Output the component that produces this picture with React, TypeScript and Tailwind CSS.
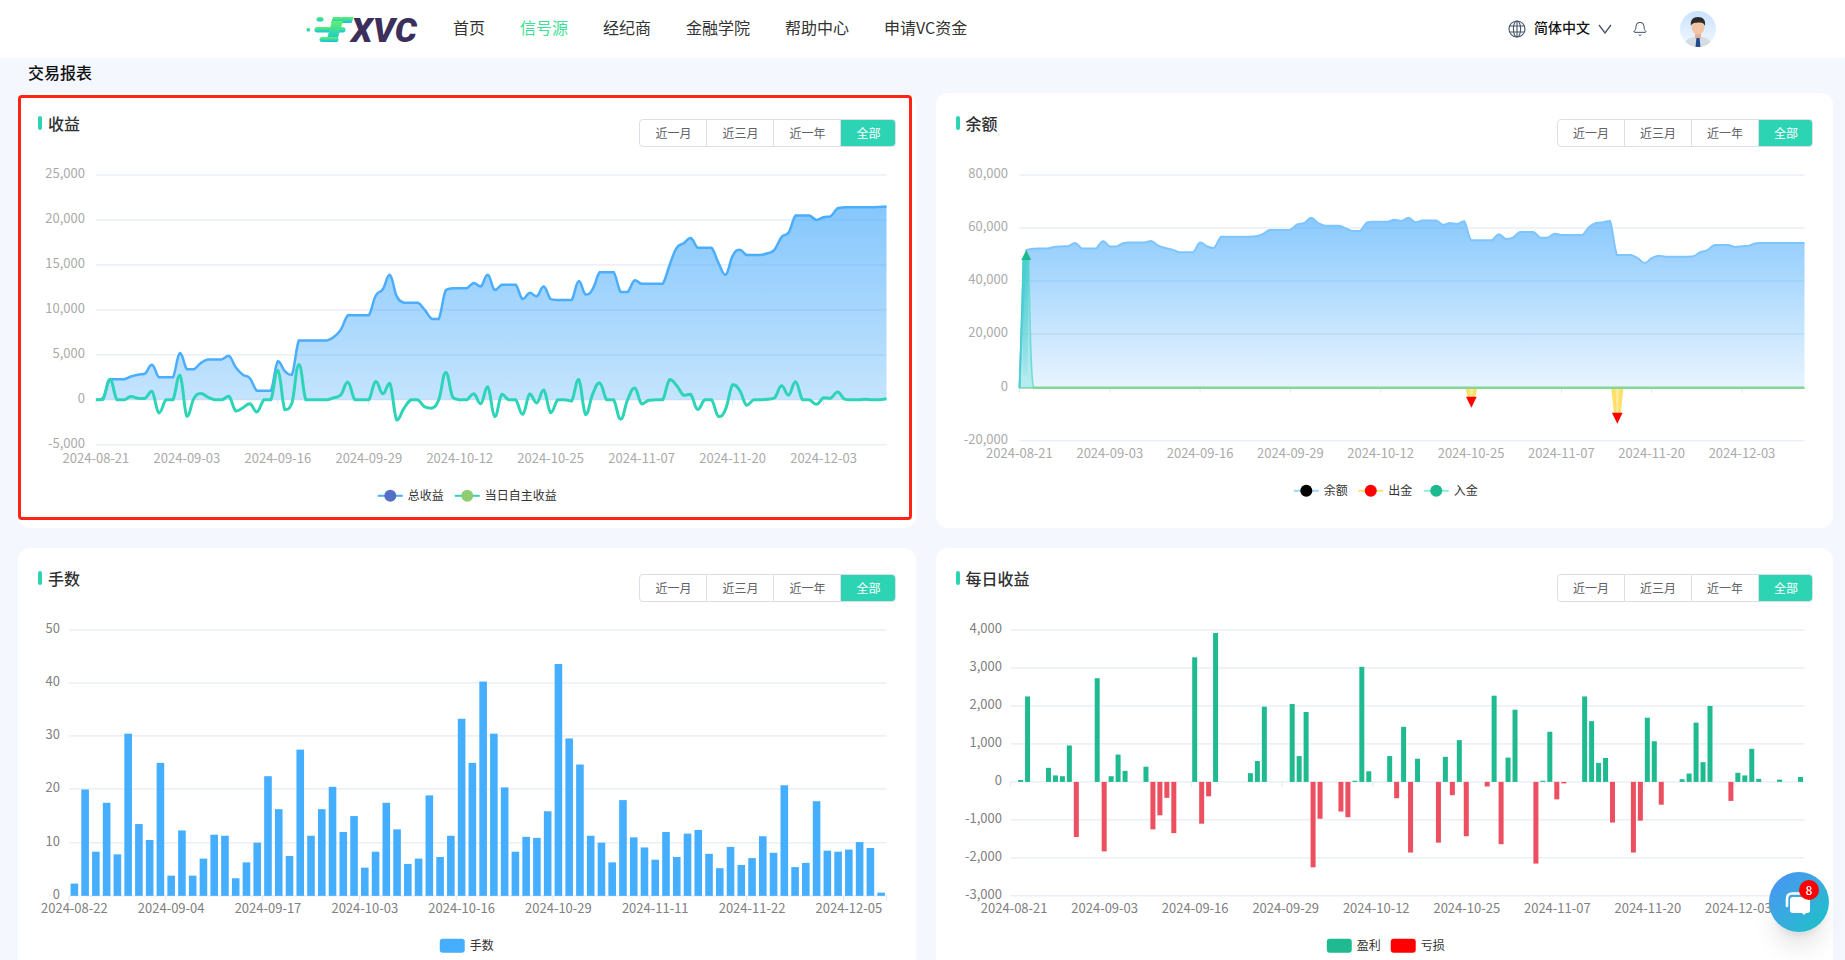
import { Bell } from "lucide-react";

// Chart data read off the report: thousands per day, one entry per category.
const DAILY = [
  0, 0.05, 2.25, 0, 0, 0.37, 0.17, 0.15, 0.96, -1.45,
  0, 0, 2.73, -1.83, 0.15, 0.72, 0.29, 0, 0, 0.4,
  -1.25, -0.88, -0.42, -1.35, 0, 0, 3.28, -1.1, -0.38, 3.92,
  0, 0, 0, 0, 0.23, 0.55, 1.98, 0, 0, 0,
  2.05, 0.68, 1.84, -2.25, -0.97, 0, 0, -0.78, -0.93, 0.03,
  3.03, 0.28, 0, 0, 0.68, -0.43, 1.45, -1.86, 0.61, 0,
  0, -1.6, 0.66, -0.35, 1.1, -1.43, 0, 0, -0.12, 2.27,
  -1.64, 0.64, 1.9, 0, 0, -2.15, 0.03, 1.32, -0.46, -0.04,
  0, 0, 2.25, 1.6, 0.5, 0.63, -1.07, 0, 0, -1.86,
  -1.02, 1.69, 1.07, -0.6, 0, 0, 0.07, 0.22, 1.56, 0.52,
  2, 0, 0, -0.5, 0.24, 0.17, 0.87, 0.08, 0, 0,
  0.06, 0, 0, 0.13,
];

const TOTAL = [
  0, 0.2, 2.3, 2.3, 2.3, 2.6, 2.8, 2.9, 3.9, 2.5,
  2.5, 2.5, 5.2, 3.4, 3.4, 4.1, 4.5, 4.5, 4.5, 4.9,
  3.6, 2.8, 2.4, 1, 1, 1, 4.3, 3.2, 2.8, 6.6,
  6.6, 6.6, 6.6, 6.6, 7, 7.8, 9.4, 9.4, 9.4, 9.4,
  11.6, 12.3, 13.9, 11.5, 10.8, 10.8, 10.8, 10, 9, 9,
  12.2, 12.4, 12.4, 12.4, 13, 12.6, 13.9, 12.2, 12.8, 12.8,
  12.8, 11.2, 11.9, 11.5, 12.6, 11.2, 11.1, 11.1, 11.1, 13.2,
  11.7, 12.3, 14.2, 14.2, 14.2, 12, 12, 13.3, 12.9, 12.9,
  12.9, 12.9, 15, 16.9, 17.4, 18, 16.9, 16.9, 16.9, 15.2,
  13.9, 16, 16.7, 16.1, 16.1, 16.1, 16.3, 16.7, 18.1, 18.6,
  20.5, 20.5, 20.5, 20, 20.3, 20.4, 21.3, 21.4, 21.4, 21.4,
  21.4, 21.4, 21.45, 21.5,
];

const BALANCE = [
  0, 51.8, 52.3, 52.4, 52.4, 53, 53.2, 53.3, 54.5, 52.4,
  52.4, 52.4, 55.2, 53.2, 53.2, 54.5, 54.7, 54.7, 54.7, 55.2,
  53.5, 52.6, 52, 51, 51, 51, 54.7, 53.2, 52.6, 56.8,
  56.8, 56.8, 56.8, 56.8, 57, 57.8, 59.4, 59.4, 59.4, 59.5,
  61.5, 62, 64, 62, 61, 61, 61, 60, 59, 59,
  62.2, 62.5, 62.5, 62.5, 63.2, 62.8, 64, 62.3, 63, 63,
  63, 61.3, 62, 61.6, 62.7, 55.5, 55.5, 55.5, 55.5, 57.8,
  56, 56.5, 58.6, 58.6, 58.6, 56.5, 56.5, 58, 57.5, 57.5,
  57.5, 57.5, 60.5, 62, 62.3, 62.8, 50, 50, 50, 48.8,
  47, 48.8, 49.7, 49.3, 49.3, 49.3, 49.3, 49.5, 51, 51.8,
  53.7, 53.7, 53.7, 53, 53.3, 53.5, 54.4, 54.5, 54.5, 54.5,
  54.5, 54.5, 54.5, 54.5,
];

const LOTS = [
  2.3, 20, 8.3, 17.5, 7.8, 30.5, 13.5, 10.5, 25, 3.8,
  12.3, 3.8, 7, 11.5, 11.3, 3.3, 6.3, 10, 22.5, 16.3,
  7.5, 27.5, 11.3, 16.3, 20.5, 12, 15, 5.3, 8.3, 17.5,
  12.5, 6, 7, 18.9, 7.3, 11.3, 33.3, 25, 40.3, 30.5,
  20.4, 8.3, 11.1, 10.9, 15.9, 43.6, 29.6, 24.7, 11.3, 10,
  6.3, 18, 11, 9.1, 6.8, 12, 7.3, 11.7, 12.4, 7.9,
  5.2, 9.2, 5.8, 7.1, 11.2, 8.1, 20.8, 5.4, 6.2, 17.8,
  8.5, 8.3, 8.7, 10.1, 9, 0.6,
];

const DATES_13 = ["2024-08-21", "2024-09-03", "2024-09-16", "2024-09-29", "2024-10-12", "2024-10-25", "2024-11-07", "2024-11-20", "2024-12-03"];
const DATES_LOTS = ["2024-08-22", "2024-09-04", "2024-09-17", "2024-10-03", "2024-10-16", "2024-10-29", "2024-11-11", "2024-11-22", "2024-12-05"];
const RANGES = ["近一月", "近三月", "近一年", "全部"];

type Pt = [number, number];

const clamp = (v: number, a: number, b: number) => Math.min(Math.max(a, b), Math.max(Math.min(a, b), v));

// Same idea as echarts' smooth line: control points stay between the neighbours.
const smoothPath = (pts: Pt[]) => {
  const k = 0.22;
  let d = `M${pts[0][0]} ${pts[0][1]}`;
  for (let i = 0; i < pts.length - 1; i++) {
    const p0 = pts[i - 1] ?? pts[i];
    const p1 = pts[i];
    const p2 = pts[i + 1];
    const p3 = pts[i + 2] ?? p2;
    const c1y = clamp(p1[1] + (p2[1] - p0[1]) * k, p1[1], p2[1]);
    const c2y = clamp(p2[1] - (p3[1] - p1[1]) * k, p1[1], p2[1]);
    d += `C${p1[0] + (p2[0] - p0[0]) * k} ${c1y} ${p2[0] - (p3[0] - p1[0]) * k} ${c2y} ${p2[0]} ${p2[1]}`;
  }
  return d;
};

function Grid({ x1, x2, rows, end, color }: { x1: number; x2: number; rows: [string, number][]; end: number; color: string }) {
  return (
    <g>
      {rows.map(([label, y]) => (
        <g key={label}>
          <line x1={x1} x2={x2} y1={y} y2={y} stroke="#e0e6f1" />
          <text x={end} y={y + 3} textAnchor="end" fontSize={13} fill={color}>
            {label}
          </text>
        </g>
      ))}
    </g>
  );
}

function XAxis({ labels, at, y, color }: { labels: string[]; at: (i: number) => number; y: number; color: string }) {
  return (
    <g>
      {labels.map((label, i) => (
        <text key={label} x={at(i)} y={y} textAnchor="middle" fontSize={13} fill={color}>
          {label}
        </text>
      ))}
    </g>
  );
}

function Ticks({ xs, y }: { xs: number[]; y: number }) {
  return (
    <g>
      {xs.map((x) => (
        <line key={x} x1={x} x2={x} y1={y} y2={y + 5} stroke="#e0e6f1" />
      ))}
    </g>
  );
}

function LineLegend({ x, y, line, dot, label }: { x: number; y: number; line: string; dot: string; label: string }) {
  return (
    <g>
      <line x1={x} x2={x + 25} y1={y} y2={y} stroke={line} strokeWidth={2} />
      <circle cx={x + 12.5} cy={y} r={6} fill={dot} />
      <text x={x + 30} y={y + 4} fontSize={12} fill="#333">
        {label}
      </text>
    </g>
  );
}

function BarLegend({ x, y, color, label }: { x: number; y: number; color: string; label: string }) {
  return (
    <g>
      <rect x={x} y={y - 7} width={25} height={14} rx={3} fill={color} />
      <text x={x + 30} y={y + 4} fontSize={12} fill="#333">
        {label}
      </text>
    </g>
  );
}

function ProfitChart() {
  const xOf = (i: number) => 96 + i * 7;
  const yOf = (v: number) => 400 - v * 9;
  const total = TOTAL.map((v, i): Pt => [xOf(i), yOf(v)]);
  const daily = DAILY.map((v, i): Pt => [xOf(i), yOf(v)]);
  return (
    <svg viewBox="18 147 898 381" className="block w-full">
      <defs>
        <linearGradient id="profitArea" x1="0" y1="0" x2="0" y2="1">
          <stop offset="0" stopColor="#3ba5fb" stopOpacity={0.62} />
          <stop offset="1" stopColor="#3ba5fb" stopOpacity={0.3} />
        </linearGradient>
      </defs>
      <Grid
        x1={96}
        x2={887}
        end={85}
        color="#aaa"
        rows={[["25,000", 175], ["20,000", 220], ["15,000", 265], ["10,000", 310], ["5,000", 355], ["0", 400], ["-5,000", 445]]}
      />
      <Ticks xs={DATES_13.map((_, i) => xOf(i * 13))} y={400} />
      <path d={`${smoothPath(total)}L887 400L96 400Z`} fill="url(#profitArea)" />
      <path d={smoothPath(total)} fill="none" stroke="#4aadfd" strokeWidth={2.5} />
      <path d={smoothPath(daily)} fill="none" stroke="#2dd4b8" strokeWidth={3} />
      <XAxis labels={DATES_13} at={(i) => xOf(i * 13)} y={463} color="#aaa" />
      <LineLegend x={378} y={496} line="#4aadfd" dot="#5470c6" label="总收益" />
      <LineLegend x={455} y={496} line="#2dd4b8" dot="#91cc75" label="当日自主收益" />
    </svg>
  );
}

function BalanceChart() {
  const step = 785.5 / 113;
  const xOf = (i: number) => 1018.5 + i * step;
  const yOf = (v: number) => 388 - v * 2.66;
  const balance = BALANCE.map((v, i): Pt => [xOf(i), yOf(v)]);
  return (
    <svg viewBox="935 147 898 381" className="block w-full">
      <defs>
        <linearGradient id="balanceArea" x1="0" y1="0" x2="0" y2="1">
          <stop offset="0" stopColor="#3ba5fb" stopOpacity={0.6} />
          <stop offset="1" stopColor="#3ba5fb" stopOpacity={0.12} />
        </linearGradient>
        <linearGradient id="depositCore" x1="0" y1="0" x2="0" y2="1">
          <stop offset="0" stopColor="#3fcfc9" stopOpacity={0.8} />
          <stop offset="1" stopColor="#3fcfc9" stopOpacity={0.1} />
        </linearGradient>
      </defs>
      <Grid
        x1={1018.5}
        x2={1804}
        end={1007}
        color="#aaa"
        rows={[["80,000", 175], ["60,000", 228], ["40,000", 281], ["20,000", 334], ["0", 388], ["-20,000", 441]]}
      />
      <Ticks xs={DATES_13.map((_, i) => xOf(i * 13))} y={388} />
      <path d={`${smoothPath(balance)}L1804 388L1018.5 388Z`} fill="url(#balanceArea)" />
      <path d={smoothPath(balance)} fill="none" stroke="#7ec5fd" strokeWidth={2} />
      {/* withdrawals */}
      <path d="M1018.5 387H1032V389H1018.5Z" fill="#ffe27a" />
      <path d="M1464.7 389H1476.7L1474 398H1467.4Z" fill="#ffdf66" />
      <path d="M1610.7 389H1622.7L1620 414H1613.4Z" fill="#ffdf66" />
      <path d="M1469 389H1472.5L1471.5 398H1470Z" fill="#fff" fillOpacity={0.35} />
      <path d="M1615 389H1618.5L1617.5 414H1616Z" fill="#fff" fillOpacity={0.35} />
      <polygon points="1465.3,397 1476,397 1470.7,408" fill="#f00" />
      <polygon points="1611.3,413 1622,413 1616.7,424" fill="#f00" />
      {/* deposit spike */}
      <path d="M1018.5 388L1022.5 258H1028C1029 330 1030 385 1033 388Z" fill="#2dd4c0" fillOpacity={0.25} stroke="#6fdcd2" strokeWidth={1.5} />
      <path d="M1021.5 258H1028L1026.5 375H1022Z" fill="url(#depositCore)" />
      <line x1={1018.5} x2={1022.5} y1={388} y2={258} stroke="#45cfcf" strokeWidth={1.5} />
      <polygon points="1025.3,250 1030.3,260 1020.3,260" fill="#1fb98f" />
      <line x1={1032} x2={1804} y1={388} y2={388} stroke="#84d696" strokeWidth={2.5} />
      <XAxis labels={DATES_13} at={(i) => xOf(i * 13)} y={458} color="#aaa" />
      <LineLegend x={1293} y={491} line="#a0d4ff" dot="#000" label="余额" />
      <LineLegend x={1357.5} y={491} line="#ffdf70" dot="#f00" label="出金" />
      <LineLegend x={1423} y={491} line="#8eecd8" dot="#1fb98f" label="入金" />
    </svg>
  );
}

function LotsChart() {
  const step = 818 / 76;
  const x0 = 69;
  return (
    <svg viewBox="18 602 898 381" className="block w-full">
      <Grid
        x1={x0}
        x2={887}
        end={60}
        color="#808080"
        rows={[["50", 630], ["40", 683], ["30", 736], ["20", 789], ["10", 843], ["0", 896]]}
      />
      <Ticks xs={[0, 1, 2, 3, 4, 5, 6, 7, 8].map((i) => x0 + i * 9 * step).concat(887)} y={896} />
      {LOTS.map((v, i) => (
        <rect key={i} x={x0 + (i + 0.5) * step - 3.8} y={896 - v * 5.32} width={7.6} height={v * 5.32} fill="#46aeff" />
      ))}
      <XAxis labels={DATES_LOTS} at={(i) => x0 + (i * 9 + 0.5) * step} y={913} color="#808080" />
      <BarLegend x={440} y={946} color="#46aeff" label="手数" />
    </svg>
  );
}

function DailyChart() {
  const x0 = 1009.7;
  const step = 794.3 / 114;
  return (
    <svg viewBox="935 602 898 381" className="block w-full">
      <Grid
        x1={x0}
        x2={1804}
        end={1001}
        color="#808080"
        rows={[["4,000", 630], ["3,000", 668], ["2,000", 706], ["1,000", 744], ["0", 782], ["-1,000", 820], ["-2,000", 858], ["-3,000", 896]]}
      />
      <Ticks xs={DATES_13.map((_, i) => x0 + i * 13 * step)} y={782} />
      {DAILY.map((v, i) =>
        v === 0 ? null : (
          <rect
            key={i}
            x={x0 + (i + 0.5) * step - 3}
            y={v > 0 ? 782 - v * 38 : 782}
            width={5}
            height={Math.abs(v) * 38}
            fill={v > 0 ? "#1fba90" : "#eb4f60"}
          />
        ),
      )}
      <XAxis labels={DATES_13} at={(i) => x0 + (i * 13 + 0.5) * step} y={913} color="#808080" />
      <BarLegend x={1326} y={946} color="#1fba90" label="盈利" />
      <BarLegend x={1390} y={946} color="#f00" label="亏损" />
    </svg>
  );
}

function RangeTabs() {
  return (
    <div className="mt-2 flex h-7 overflow-hidden rounded border border-[#dcdfe6]">
      {RANGES.map((r) =>
        r === "全部" ? (
          <span key={r} className="-my-px -mr-px flex items-center bg-[#2dd4b4] px-3.75 text-xs text-white">
            {r}
          </span>
        ) : (
          <span key={r} className="flex items-center border-r border-[#dcdfe6] px-3.75 text-xs text-[#606266]">
            {r}
          </span>
        ),
      )}
    </div>
  );
}

function Card({ title, children, outlined }: { title: string; children: React.ReactNode; outlined?: boolean }) {
  return (
    <section className="relative h-[435px] rounded-xl bg-white">
      <div className="flex items-start justify-between px-5 pt-4.5">
        <h2 className="flex items-center gap-1.5 text-base leading-6 font-medium text-[#303133]">
          <span className="h-3.5 w-1 rounded-sm bg-[#2dd4b4]" />
          {title}
        </h2>
        <RangeTabs />
      </div>
      {children}
      {outlined && <div className="pointer-events-none absolute top-0.5 right-1 bottom-2 left-0 rounded-sm border-3 border-[#ff2415]" />}
    </section>
  );
}

function Logo() {
  return (
    <svg width="112" height="25" viewBox="0 0 112 25" className="overflow-visible">
      <defs>
        <linearGradient id="logoF" x1="0" y1="0" x2="0" y2="1">
          <stop offset="0" stopColor="#62f16a" />
          <stop offset="1" stopColor="#10c2e2" />
        </linearGradient>
      </defs>
      <g fill="url(#logoF)">
        <rect x="10.5" y="0" width="7" height="4.5" rx="2.2" />
        <path d="M27 0H47.5L45.5 6H25Z" />
        <rect x="8.5" y="10" width="31" height="5.5" rx="2.7" />
        <circle cx="2.3" cy="12.7" r="1.9" />
        <path d="M26 4H37L30.5 25H20Z" />
        <rect x="13.5" y="20" width="19" height="5" rx="2.5" />
      </g>
      <text x="45" y="24.5" textLength="66" lengthAdjust="spacingAndGlyphs" fontSize="34" fontWeight="900" fontStyle="italic" fill="#3d2f5b" fontFamily="Roboto, sans-serif">
        XVC
      </text>
    </svg>
  );
}

function Avatar() {
  return (
    <svg viewBox="0 0 36 36" className="size-9 rounded-full">
      <defs>
        <linearGradient id="avatarBg" x1="0" y1="0" x2="0" y2="1">
          <stop offset="0" stopColor="#c9e2ff" />
          <stop offset="1" stopColor="#f4f9ff" />
        </linearGradient>
      </defs>
      <rect width="36" height="36" fill="url(#avatarBg)" />
      <path d="M4 36C4 29 9 27 14 26H22C27 27 32 29 32 36Z" fill="#d5dde2" />
      <path d="M16.5 26H19.5L20.5 36H15.5Z" fill="#24478f" />
      <rect x="15" y="21" width="6" height="6" fill="#e3b193" />
      <ellipse cx="18" cy="16" rx="6.5" ry="7.5" fill="#f2c4a6" />
      <path d="M11 15C10 9 13 6 18 6C23 6 26 9 25 15C24 12 22 11 18 11.5C14 12 12 12 11 15Z" fill="#2b2b2b" />
    </svg>
  );
}

function Header() {
  return (
    <header className="flex h-14.5 items-center bg-white pr-[129px] pl-[306px]">
      <Logo />
      <nav className="ml-8.75 flex gap-8.75 pb-1 text-base text-[#333]">
        <span>首页</span>
        <span className="text-[#3fdf98]">信号源</span>
        <span>经纪商</span>
        <span>金融学院</span>
        <span>帮助中心</span>
        <span>申请VC资金</span>
      </nav>
      <div className="ml-auto flex items-center">
        <svg viewBox="0 0 18 18" className="size-4.5" fill="none" stroke="#475569" strokeWidth="1.1">
          <circle cx="9" cy="9" r="8" />
          <ellipse cx="9" cy="9" rx="3.6" ry="8" />
          <path d="M9 1V17M1.6 6H16.4M1.6 12H16.4" />
        </svg>
        <span className="ml-2 pb-1 text-sm font-medium text-[#111]">简体中文</span>
        <svg width="14" height="10" viewBox="0 0 14 10" className="ml-2" fill="none" stroke="#475569" strokeWidth="1.3">
          <path d="M1 1L7 9L13 1" />
        </svg>
        <Bell className="ml-5 size-4 text-[#334155]" strokeWidth={1.4} />
        <div className="ml-8">
          <Avatar />
        </div>
      </div>
    </header>
  );
}

function ChatButton() {
  return (
    <button className="fixed right-4 bottom-7 flex size-15 items-center justify-center rounded-full bg-gradient-to-br from-[#4b8ff6] to-[#11c4c4] shadow-xl">
      <svg viewBox="0 0 60 60" className="size-15" fill="none">
        <path d="M18 34V27C18 23.5 20 21.5 23 21.5H35" stroke="#fff" strokeWidth="2.6" strokeLinecap="round" />
        <path d="M24 25H38C40 25 41 26 41 28V38C41 40 40 41 38 41H37L35 43L33 41H24C22 41 21 40 21 38V28C21 26 22 25 24 25Z" fill="#fff" />
      </svg>
      <span className="absolute top-2 right-2.5 flex size-5 items-center justify-center rounded-full bg-[#f00] text-xs font-medium text-white">
        8
      </span>
    </button>
  );
}

export default function App() {
  return (
    <div className="h-screen overflow-hidden bg-[#f4f7fe] font-['Noto_Sans_CJK_SC',sans-serif]">
      <Header />
      <main className="pr-3 pl-4.5">
        <h1 className="pt-0.5 pb-2.25 pl-2.5 text-base leading-6 font-medium text-[#111]">交易报表</h1>
        <div className="grid grid-cols-2 gap-5">
          <Card title="收益" outlined>
            <ProfitChart />
          </Card>
          <Card title="余额">
            <BalanceChart />
          </Card>
          <Card title="手数">
            <LotsChart />
          </Card>
          <Card title="每日收益">
            <DailyChart />
          </Card>
        </div>
      </main>
      <ChatButton />
    </div>
  );
}
